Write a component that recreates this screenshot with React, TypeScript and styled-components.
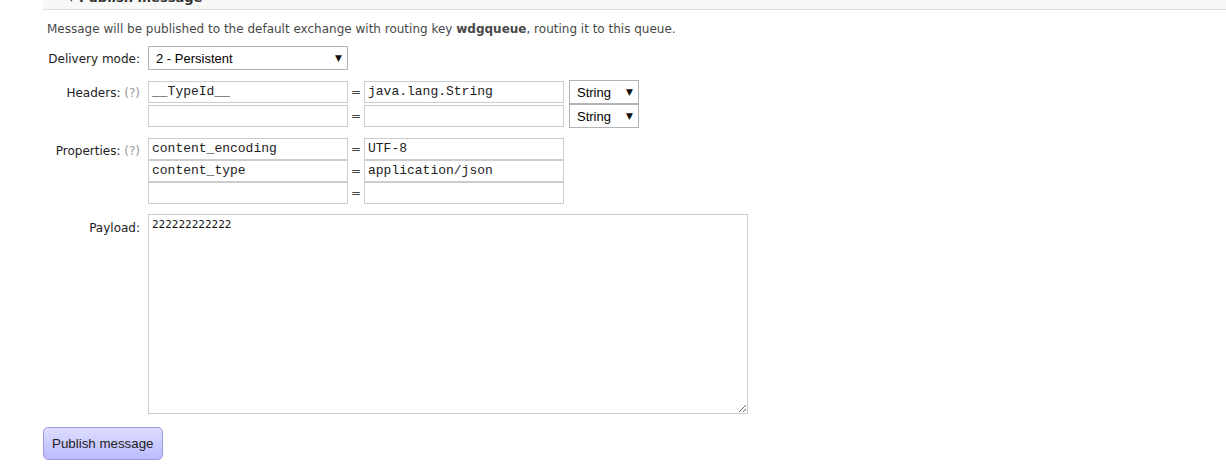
import React from 'react';
import styled, { createGlobalStyle } from 'styled-components';

const Global = createGlobalStyle`
  html, body {
    margin: 0;
    padding: 0;
    background: #fff;
  }
  body {
    font-family: "DejaVu Sans", Verdana, sans-serif;
    font-size: 12px;
    color: #484848;
  }
`;

const Section = styled.div`
  margin-left: 43px;
`;

const SectionHead = styled.div`
  height: 9px;
  overflow: hidden;
  background: #f8f8f8;
  border-bottom: 1px solid #dcdcdc;
`;

const SectionTitle = styled.h2`
  margin: -9px 0 0 25px;
  font-size: 13px;
  line-height: 14px;
  font-weight: bold;
  color: #333;
  white-space: nowrap;
`;

const Intro = styled.p`
  margin: 12px 0 0 4px;
  line-height: 15px;
`;

const Form = styled.div`
  margin-top: 9px;
  display: grid;
  grid-template-columns: 97px 1fr;
  column-gap: 8px;
  row-gap: 10px;
  align-items: start;
`;

const Label = styled.div<{ $top?: number }>`
  text-align: right;
  color: #222;
  padding-top: ${(p) => p.$top ?? 0}px;
  line-height: 15px;
  white-space: nowrap;
`;

const Help = styled.span`
  color: #999;
`;

const Select = styled.div<{ $w: number }>`
  box-sizing: border-box;
  width: ${(p) => p.$w}px;
  height: 24px;
  border: 1px solid #b4b4b4;
  background: #fff;
  display: flex;
  align-items: center;
  justify-content: space-between;
  padding: 0 5px 0 7px;
  font-family: "Liberation Sans", Arial, sans-serif;
  font-size: 13px;
  color: #000;
`;

const Arrow = styled.span`
  font-family: "DejaVu Sans", sans-serif;
  font-size: 9px;
  color: #111;
`;

const Rows = styled.div`
  display: flex;
  flex-direction: column;
`;

const Row = styled.div<{ $h: number }>`
  display: flex;
  align-items: center;
  height: ${(p) => p.$h}px;
`;

const Input = styled.div`
  box-sizing: border-box;
  width: 200px;
  height: 22px;
  border: 1px solid #ccc;
  background: #fff;
  padding: 0 3px;
  font-family: "Liberation Mono", "Courier New", monospace;
  font-size: 13px;
  line-height: 20px;
  color: #222;
  white-space: pre;
  overflow: hidden;
`;

const Eq = styled.span`
  width: 16px;
  text-align: center;
  color: #444;
  font-size: 12px;
`;

const TypeSelect = styled(Select)`
  margin-left: 5px;
`;

const Payload = styled.textarea`
  box-sizing: border-box;
  width: 600px;
  height: 200px;
  border: 1px solid #ccc;
  padding: 3px 3px;
  margin: 0;
  font-family: "DejaVu Sans Mono", monospace;
  font-size: 11px;
  color: #111;
  resize: both;
  display: block;
  outline: none;
`;

const Button = styled.button`
  margin-top: 13px;
  height: 33px;
  padding: 0 8px;
  border: 1px solid #99d;
  border-radius: 5px;
  background: linear-gradient(#ddf, #bbf);
  font-family: "Liberation Sans", Arial, sans-serif;
  font-size: 13.33px;
  color: #222;
  cursor: pointer;
`;

const headers = [
  { key: '__TypeId__', value: 'java.lang.String' },
  { key: '', value: '' },
];

const properties = [
  { key: 'content_encoding', value: 'UTF-8' },
  { key: 'content_type', value: 'application/json' },
  { key: '', value: '' },
];

export default function App() {
  return (
    <Section>
      <Global />
      <SectionHead>
        <SectionTitle>▾ Publish message</SectionTitle>
      </SectionHead>
      <Intro>
        Message will be published to the default exchange with routing key <b>wdgqueue</b>, routing it to this queue.
      </Intro>
      <Form>
        <Label $top={6}>Delivery mode:</Label>
        <Select $w={200}>
          <span>2 - Persistent</span>
          <Arrow>▼</Arrow>
        </Select>

        <Label $top={6}>
          Headers: <Help>(?)</Help>
        </Label>
        <Rows>
          {headers.map((h, i) => (
            <Row key={i} $h={24}>
              <Input>{h.key}</Input>
              <Eq>=</Eq>
              <Input>{h.value}</Input>
              <TypeSelect $w={70}>
                <span>String</span>
                <Arrow>▼</Arrow>
              </TypeSelect>
            </Row>
          ))}
        </Rows>

        <Label $top={6}>
          Properties: <Help>(?)</Help>
        </Label>
        <Rows>
          {properties.map((p, i) => (
            <Row key={i} $h={22}>
              <Input>{p.key}</Input>
              <Eq>=</Eq>
              <Input>{p.value}</Input>
            </Row>
          ))}
        </Rows>

        <Label $top={7}>Payload:</Label>
        <Payload defaultValue="222222222222" />
      </Form>
      <Button>Publish message</Button>
    </Section>
  );
}
